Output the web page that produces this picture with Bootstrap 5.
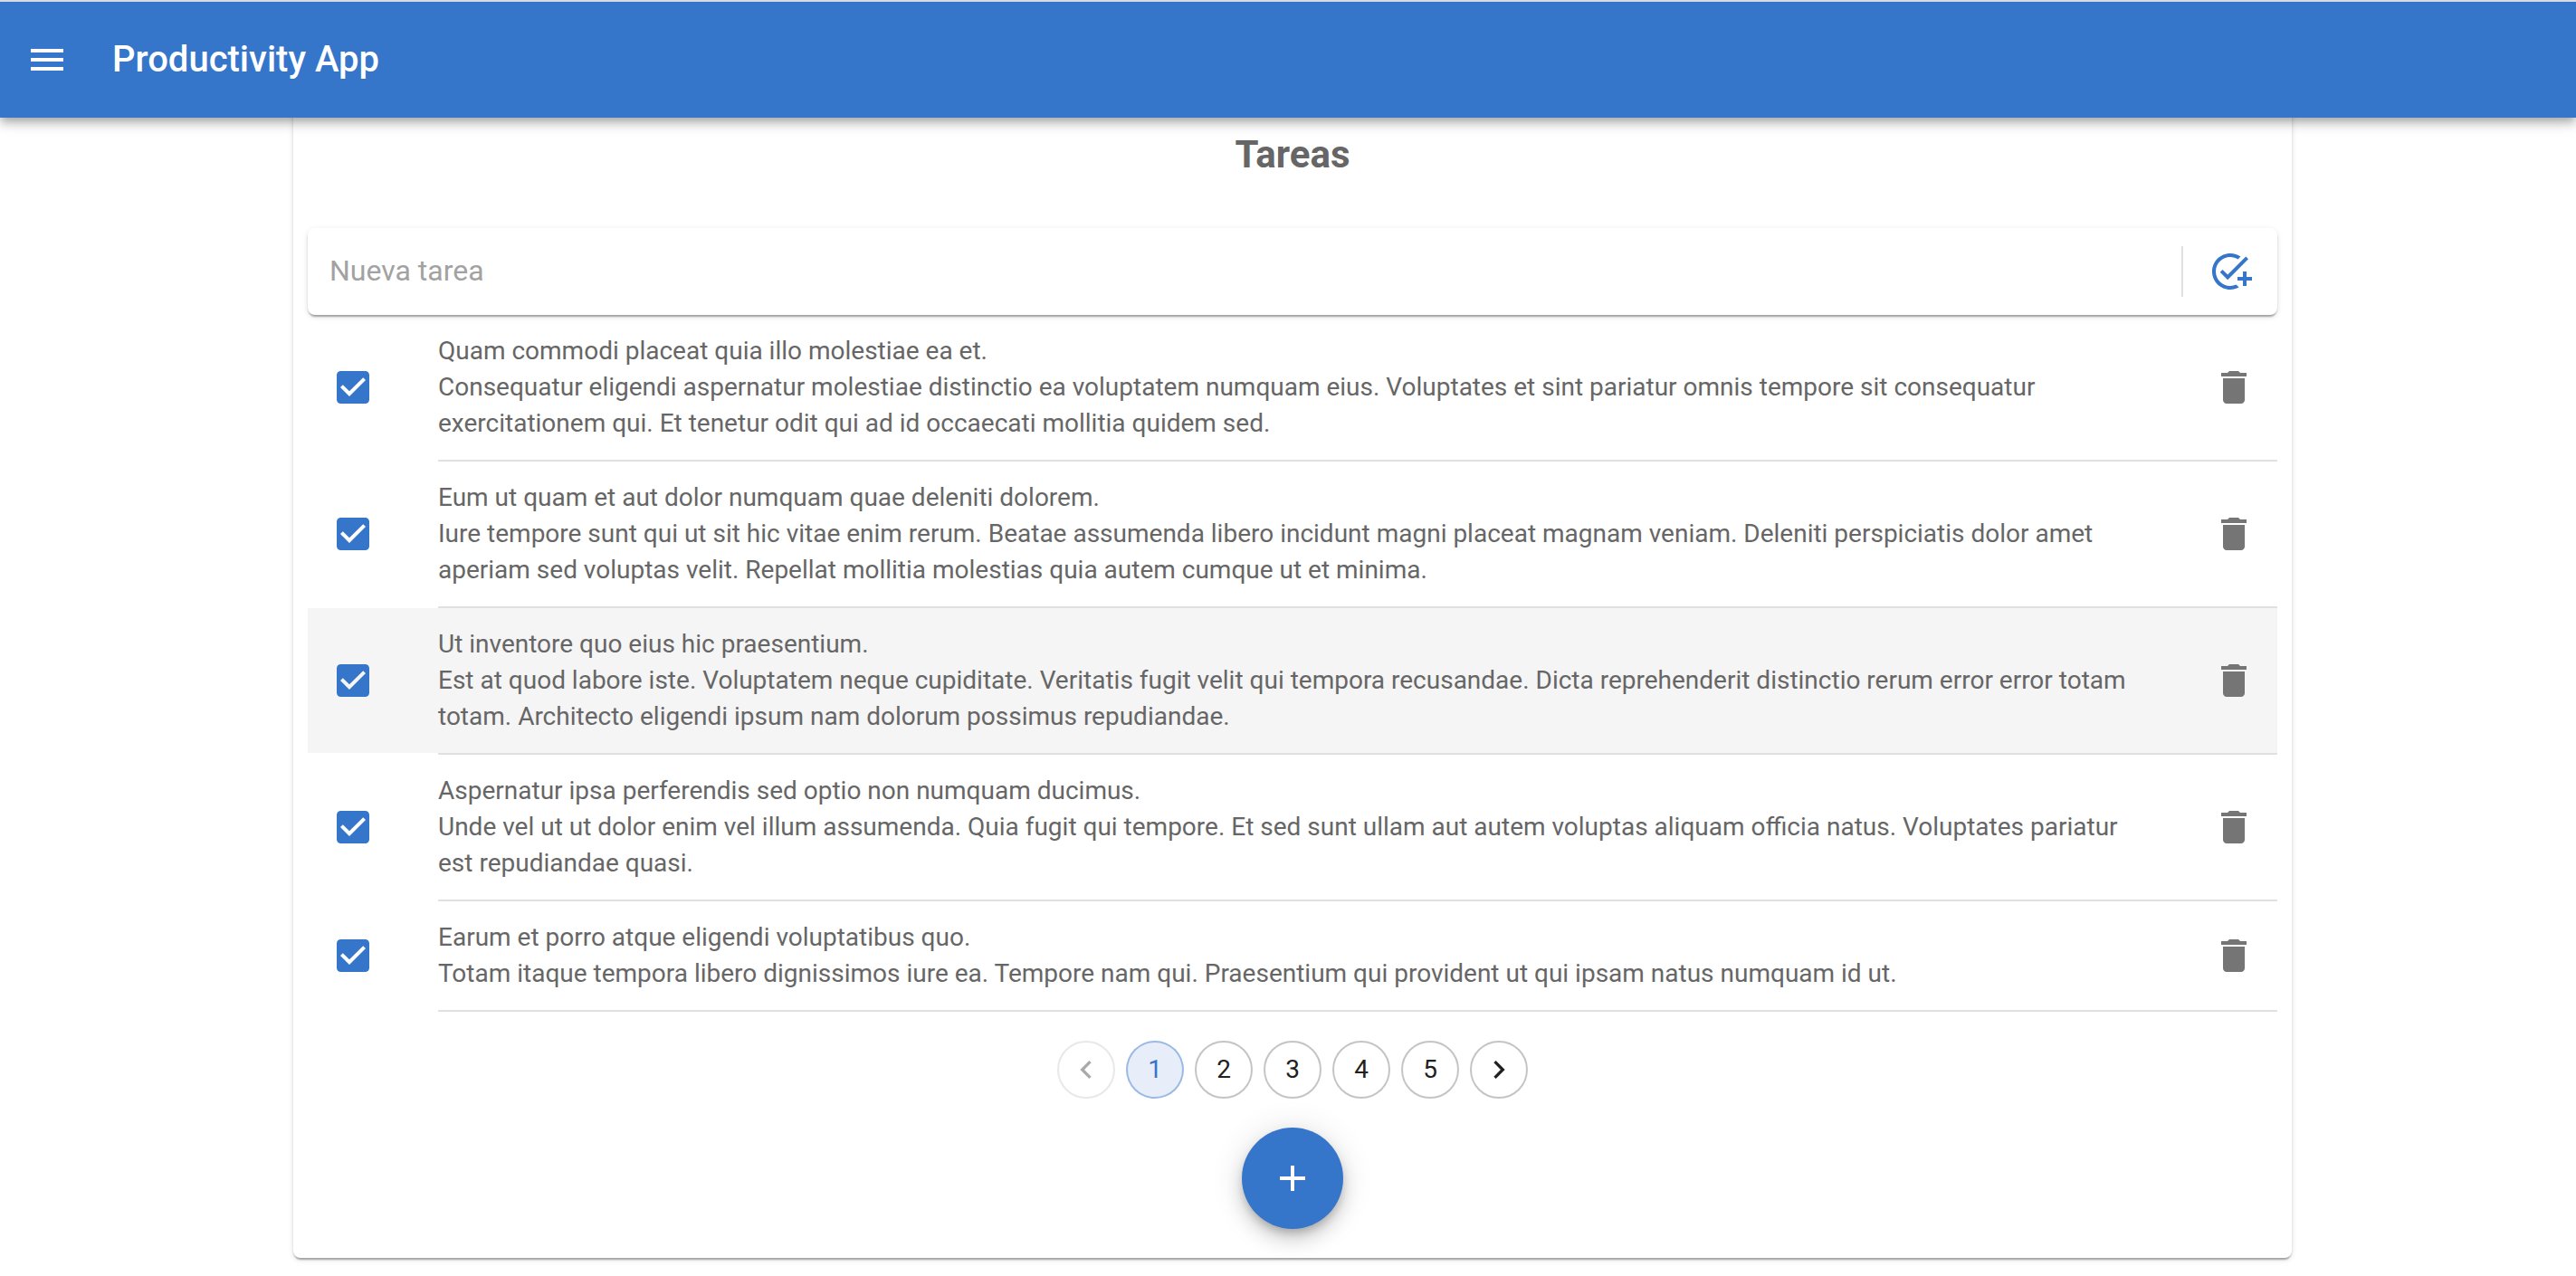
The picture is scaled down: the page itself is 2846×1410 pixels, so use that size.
<!DOCTYPE html>
<html lang="es">
<head>
<meta charset="utf-8">
<meta name="viewport" content="width=device-width, initial-scale=1">
<title>Productivity App</title>
<link rel="stylesheet" href="https://cdn.jsdelivr.net/npm/bootstrap@5.3.0/dist/css/bootstrap.min.css">
<style>
:root { --app-blue: #3575ca; --app-gray: #666; }
body { font-family: Roboto, "Open Sans", sans-serif; font-size: 28px; line-height: 40px; color: var(--app-gray); border-top: 2px solid #d5dbe2; }
.app-bar { height: 128px; padding: 0 4px; gap: 24px; background: var(--app-blue); box-shadow: 0 4px 8px -2px rgba(0,0,0,.2), 0 8px 10px rgba(0,0,0,.14), 0 2px 20px rgba(0,0,0,.12); }
.app-title { font-size: 40px; font-weight: 500; line-height: 64px; }
.icon-btn { padding: 24px; border: 0; line-height: 1; color: #757575; }
.icon-btn svg { display: block; width: 48px; height: 48px; fill: currentColor; }
.page { padding: 0 0 16px 10px; }
.surface { border: 0; border-radius: 8px; background: #fff; box-shadow: 0 4px 2px -2px rgba(0,0,0,.2), 0 2px 2px rgba(0,0,0,.14), 0 2px 6px rgba(0,0,0,.12); }
.board { max-width: 2208px; margin-top: -24px; padding: 35px 16px 32px; }
.board-title { font-size: 42px; line-height: 60px; font-weight: 700; margin-bottom: 51px; }
.new-task { height: 96px; padding: 4px 8px 4px 24px; gap: 8px; }
.new-task input { font-size: 32px; line-height: 40px; padding: 0 0 2px; border: 0; background: transparent; }
.new-task input:focus { box-shadow: none; }
.new-task input::placeholder { color: #a2a2a2; }
.new-task .icon-btn { padding: 20px; color: var(--app-blue); }
.bar-split { width: 2px; height: 56px; background: #e0e0e0; }
.task-row { padding-left: 32px; }
.task-row.hovered, .task-row:hover { background: #f5f5f5; }
.task-row .form-check-input { width: 36px; height: 36px; margin: 0 76px 0 0; border: 0; border-radius: 4px; }
.task-row .form-check-input:not(:checked) { border: 4px solid var(--app-gray); }
.task-row .form-check-input:checked { background: url("data:image/svg+xml,%3Csvg xmlns='http://www.w3.org/2000/svg' viewBox='3 3 18 18'%3E%3Cpath fill='%233575ca' d='M19 3H5c-1.11 0-2 .9-2 2v14c0 1.1.89 2 2 2h14c1.11 0 2-.9 2-2V5c0-1.1-.89-2-2-2zm-9 14l-5-5 1.41-1.41L10 14.17l7.59-7.59L19 8l-9 9z'/%3E%3C/svg%3E") center / 36px 36px no-repeat; }
.task-text { padding: 20px 48px 20px 0; }
.task-rule { height: 2px; margin: 0 0 0 144px; border: 0; background: #e0e0e0; opacity: 1; }
.pager { gap: 12px; margin: 32px 0; }
.pager .page-item .page-link { width: 64px; height: 64px; padding: 0; border: 2px solid rgba(0,0,0,.23); border-radius: 50%; margin: 0; font-size: 28px; line-height: 40px; color: #212121; background: transparent; }
.pager .page-item.active .page-link { color: var(--app-blue); border-color: rgba(53,117,202,.5); background: #e7edf9; background-clip: padding-box; }
.pager .page-item.disabled .page-link { opacity: .38; }
.pager svg { width: 40px; height: 40px; fill: currentColor; }
.fab { width: 112px; height: 112px; padding: 32px; border: 0; color: #fff; background: var(--app-blue); box-shadow: 0 6px 10px -2px rgba(0,0,0,.2), 0 12px 20px rgba(0,0,0,.14), 0 2px 36px rgba(0,0,0,.12); }
.fab:hover { background: #2b64b0; color: #fff; }
.fab svg { display: block; width: 48px; height: 48px; fill: currentColor; }
</style>
</head>
<body class="bg-white min-vh-100">
<svg class="d-none" aria-hidden="true">
  <symbol id="i-trash" viewBox="0 0 24 24"><path d="M6 19c0 1.1.9 2 2 2h8c1.1 0 2-.9 2-2V7H6v12zM19 4h-3.5l-1-1h-5l-1 1H5v2h14V4z"/></symbol>
</svg>

<header class="app-bar sticky-top d-flex align-items-center">
  <button type="button" class="btn icon-btn text-white" aria-label="Menú">
    <svg viewBox="0 0 24 24"><path d="M3 18h18v-2H3v2zm0-5h18v-2H3v2zm0-7v2h18V6H3z"/></svg>
  </button>
  <h1 class="app-title text-white mb-0">Productivity App</h1>
</header>

<main class="page">
  <section class="card surface board mx-auto">
    <h2 class="board-title text-center">Tareas</h2>

    <form class="surface new-task d-flex align-items-center">
      <input type="text" class="form-control flex-grow-1" placeholder="Nueva tarea" aria-label="Nueva tarea">
      <div class="bar-split flex-shrink-0"></div>
      <button type="button" class="btn icon-btn" aria-label="Agregar tarea">
        <svg viewBox="0 0 24 24"><path d="M22 5.18 10.59 16.6l-4.24-4.24 1.41-1.41 2.83 2.83 10-10L22 5.18zM12 20c-4.41 0-8-3.59-8-8s3.59-8 8-8c1.57 0 3.04.46 4.28 1.25l1.45-1.45C16.1 2.67 14.13 2 12 2 6.48 2 2 6.48 2 12s4.48 10 10 10c1.73 0 3.36-.44 4.78-1.22l-1.5-1.5c-1 .46-2.11.72-3.28.72zm7-5h-3v2h3v3h2v-3h3v-2h-3v-3h-2v3z"/></svg>
      </button>
    </form>

    <ul class="list-unstyled mb-0">
      <li>
        <div class="task-row d-flex align-items-center">
          <input class="form-check-input flex-shrink-0" type="checkbox" id="task1" checked>
          <label class="task-text flex-grow-1" for="task1">Quam commodi placeat quia illo molestiae ea et.<br>Consequatur eligendi aspernatur molestiae distinctio ea voluptatem numquam eius. Voluptates et sint pariatur omnis tempore sit consequatur exercitationem qui. Et tenetur odit qui ad id occaecati mollitia quidem sed.</label>
          <button type="button" class="btn icon-btn flex-shrink-0" aria-label="Eliminar"><svg><use href="#i-trash"/></svg></button>
        </div>
        <hr class="task-rule">
      </li>
      <li>
        <div class="task-row d-flex align-items-center">
          <input class="form-check-input flex-shrink-0" type="checkbox" id="task2" checked>
          <label class="task-text flex-grow-1" for="task2">Eum ut quam et aut dolor numquam quae deleniti dolorem.<br>Iure tempore sunt qui ut sit hic vitae enim rerum. Beatae assumenda libero incidunt magni placeat magnam veniam. Deleniti perspiciatis dolor amet aperiam sed voluptas velit. Repellat mollitia molestias quia autem cumque ut et minima.</label>
          <button type="button" class="btn icon-btn flex-shrink-0" aria-label="Eliminar"><svg><use href="#i-trash"/></svg></button>
        </div>
        <hr class="task-rule">
      </li>
      <li>
        <div class="task-row hovered d-flex align-items-center">
          <input class="form-check-input flex-shrink-0" type="checkbox" id="task3" checked>
          <label class="task-text flex-grow-1" for="task3">Ut inventore quo eius hic praesentium.<br>Est at quod labore iste. Voluptatem neque cupiditate. Veritatis fugit velit qui tempora recusandae. Dicta reprehenderit distinctio rerum error error totam totam. Architecto eligendi ipsum nam dolorum possimus repudiandae.</label>
          <button type="button" class="btn icon-btn flex-shrink-0" aria-label="Eliminar"><svg><use href="#i-trash"/></svg></button>
        </div>
        <hr class="task-rule">
      </li>
      <li>
        <div class="task-row d-flex align-items-center">
          <input class="form-check-input flex-shrink-0" type="checkbox" id="task4" checked>
          <label class="task-text flex-grow-1" for="task4">Aspernatur ipsa perferendis sed optio non numquam ducimus.<br>Unde vel ut ut dolor enim vel illum assumenda. Quia fugit qui tempore. Et sed sunt ullam aut autem voluptas aliquam officia natus. Voluptates pariatur est repudiandae quasi.</label>
          <button type="button" class="btn icon-btn flex-shrink-0" aria-label="Eliminar"><svg><use href="#i-trash"/></svg></button>
        </div>
        <hr class="task-rule">
      </li>
      <li>
        <div class="task-row d-flex align-items-center">
          <input class="form-check-input flex-shrink-0" type="checkbox" id="task5" checked>
          <label class="task-text flex-grow-1" for="task5">Earum et porro atque eligendi voluptatibus quo.<br>Totam itaque tempora libero dignissimos iure ea. Tempore nam qui. Praesentium qui provident ut qui ipsam natus numquam id ut.</label>
          <button type="button" class="btn icon-btn flex-shrink-0" aria-label="Eliminar"><svg><use href="#i-trash"/></svg></button>
        </div>
        <hr class="task-rule">
      </li>
    </ul>

    <nav aria-label="Páginas">
      <ul class="pagination pager justify-content-center">
        <li class="page-item disabled"><button type="button" class="page-link d-flex align-items-center justify-content-center" aria-label="Anterior" disabled><svg viewBox="0 0 24 24"><path d="M15.41 7.41 14 6l-6 6 6 6 1.41-1.41L10.83 12z"/></svg></button></li>
        <li class="page-item active"><button type="button" class="page-link d-flex align-items-center justify-content-center" aria-current="page">1</button></li>
        <li class="page-item"><button type="button" class="page-link d-flex align-items-center justify-content-center">2</button></li>
        <li class="page-item"><button type="button" class="page-link d-flex align-items-center justify-content-center">3</button></li>
        <li class="page-item"><button type="button" class="page-link d-flex align-items-center justify-content-center">4</button></li>
        <li class="page-item"><button type="button" class="page-link d-flex align-items-center justify-content-center">5</button></li>
        <li class="page-item"><button type="button" class="page-link d-flex align-items-center justify-content-center" aria-label="Siguiente"><svg viewBox="0 0 24 24"><path d="M10 6 8.59 7.41 13.17 12l-4.58 4.59L10 18l6-6z"/></svg></button></li>
      </ul>
    </nav>

    <button type="button" class="btn fab rounded-circle align-self-center" aria-label="Agregar">
      <svg viewBox="0 0 24 24"><path d="M19 13h-6v6h-2v-6H5v-2h6V5h2v6h6v2z"/></svg>
    </button>
  </section>
</main>
<script src="https://cdn.jsdelivr.net/npm/bootstrap@5.3.0/dist/js/bootstrap.bundle.min.js"></script>
</body>
</html>
